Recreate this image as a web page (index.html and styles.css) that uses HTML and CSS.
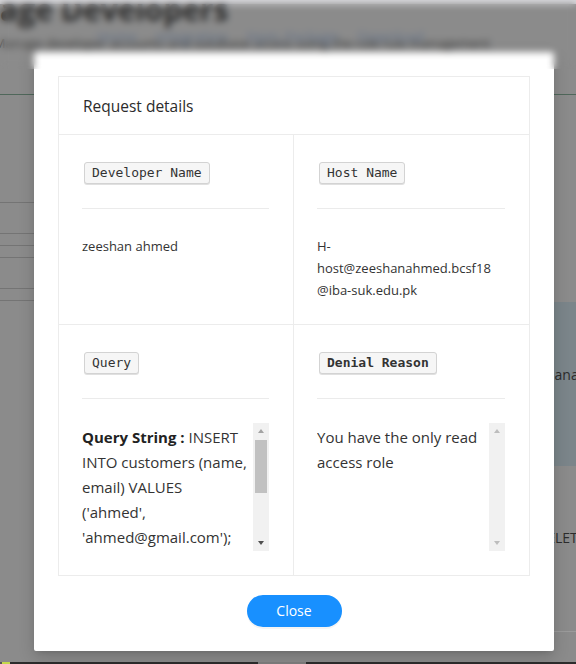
FILE: index.html
```html
<!DOCTYPE html>
<html lang="en">
<head>
<meta charset="utf-8">
<title>Manage Developers</title>
<link rel="stylesheet" href="styles.css">
</head>
<body>
<div class="page">
  <div class="topbar"></div>
  <header class="page-head">
    <h1 class="page-title">Manage Developers</h1>
    <p class="page-sub">Manage developer accounts and database access using the role rule management</p>
    <nav class="page-nav"><a>Home</a><a>Integration</a><a>Npm_Package</a><a>Download</a></nav>
  </header>
  <div class="page-body">
    <aside class="side">
      <div class="side-row h107"></div>
      <div class="side-row h30"></div>
      <div class="side-row h11"></div>
      <div class="side-row h11"></div>
      <div class="side-row h30"></div>
      <div class="side-row h11"></div>
    </aside>
    <main class="content">
      <div class="content-spacer"></div>
      <div class="band"><span>Manage</span></div>
      <div class="action-row"><span>DELETE</span></div>
    </main>
  </div>
  <div class="taskbar"><span class="tb-gap"></span><span class="tb-icon"></span><span class="tb-dark"></span><span class="tb-tab"></span><span class="tb-rest"></span></div>
</div>

<div class="modal">
  <section class="card">
    <div class="card-head">Request details</div>
    <div class="card-grid">
      <div class="cell">
        <kbd class="tag">Developer Name</kbd>
        <hr class="sep">
        <p class="value">zeeshan ahmed</p>
      </div>
      <div class="cell">
        <kbd class="tag">Host Name</kbd>
        <hr class="sep">
        <p class="value host">H-host@zeeshanahmed.bcsf18<wbr>@iba-suk.edu.pk</p>
      </div>
      <div class="cell last">
        <kbd class="tag">Query</kbd>
        <hr class="sep">
        <div class="scroll-box">
          <div class="scroll-text lines"><b>Query String :</b> INSERT<br>INTO customers (name,<br>email) VALUES<br>('ahmed',<br>'ahmed@gmail.com');<br>Requested on the<br>production database<br>by the developer.</div>
          <div class="scrollbar">
            <span class="sb-btn"><i class="arrow up"></i></span>
            <span class="sb-track"><span class="sb-thumb"></span></span>
            <span class="sb-btn"><i class="arrow down"></i></span>
          </div>
        </div>
      </div>
      <div class="cell last">
        <kbd class="tag"><b>Denial Reason</b></kbd>
        <hr class="sep">
        <div class="scroll-box">
          <div class="scroll-text">You have the only read access role</div>
          <div class="scrollbar disabled">
            <span class="sb-btn"><i class="arrow up"></i></span>
            <span class="sb-track"></span>
            <span class="sb-btn"><i class="arrow down"></i></span>
          </div>
        </div>
      </div>
    </div>
  </section>
  <div class="modal-foot">
    <button class="btn-close" type="button">Close</button>
  </div>
</div>

<div class="blur-band"></div>
</body>
</html>
```

FILE: styles.css
```css
* {
  box-sizing: border-box;
}

html, body {
  margin: 0;
  padding: 0;
}

body {
  width: 576px;
  height: 664px;
  overflow: hidden;
  position: relative;
  background: #8b8b8b;
  font-family: "Open Sans", "Liberation Sans", sans-serif;
  color: #333;
}

/* ---------- dimmed page behind the modal ---------- */
.page {
  display: flex;
  flex-direction: column;
  height: 664px;
}

.topbar {
  height: 4px;
  background: #d9d9dd;
  flex: none;
}

.page-head {
  position: relative;
  height: 91px;
  flex: none;
  border-bottom: 1px solid #4f675a;
  overflow: hidden;
}

.page-title {
  margin: -9px 0 0 -66px;
  font-size: 30px;
  line-height: 30px;
  font-weight: 700;
  color: #2b2b2b;
  white-space: nowrap;
}

.page-sub {
  margin: 10px 0 0 -6px;
  font-size: 13px;
  line-height: 16px;
  color: #3d3d3d;
  white-space: nowrap;
}

.page-nav {
  position: absolute;
  top: 24px;
  left: 97px;
  display: flex;
  gap: 19px;
  font-size: 14px;
  line-height: 18px;
  color: #66748a;
}

.page-body {
  flex: 1;
  display: grid;
  grid-template-columns: 200px 1fr;
}

.side-row {
  border-bottom: 1px solid #747474;
}
.h107 { height: 108px; }
.h30 { height: 31px; }
.h11 { height: 12px; }

.content {
  display: flex;
  flex-direction: column;
}

.content-spacer {
  height: 207px;
}

.band {
  height: 164px;
  background: #7b858a;
  padding: 63px 0 0 342px;
  font-size: 14px;
  line-height: 20px;
  color: #2c2c2c;
  white-space: nowrap;
  overflow: hidden;
}

.action-row {
  height: 166px;
  border-bottom: 1px solid #9b9b9b;
  padding: 62px 0 0 337px;
  font-size: 14px;
  line-height: 20px;
  color: #2c2c2c;
  white-space: nowrap;
  overflow: hidden;
}

.taskbar {
  height: 2px;
  flex: none;
  display: flex;
  background: #2c2c2c;
}
.tb-gap { width: 2px; background: #555; }
.tb-icon { width: 8px; background: #c4d84a; }
.tb-dark { width: 248px; }
.tb-tab { width: 48px; background: #7e7e7e; }
.tb-rest { flex: 1; }

/* ---------- modal ---------- */
.modal {
  position: absolute;
  left: 34px;
  top: 52px;
  width: 520px;
  padding: 24px;
  background: #fff;
  border-radius: 2px;
  box-shadow: 0 6px 16px rgba(0, 0, 0, 0.18), 0 3px 6px -4px rgba(0, 0, 0, 0.2);
  z-index: 5;
}

.card {
  border: 1px solid #ececec;
  background: #fff;
}

.card-head {
  height: 58px;
  padding: 0 24px;
  border-bottom: 1px solid #ececec;
  display: flex;
  align-items: center;
  font-size: 15.5px;
  color: #2b2b2b;
}

.card-grid {
  display: grid;
  grid-template-columns: repeat(2, minmax(0, 1fr));
}

.cell {
  padding: 27px 24px 23px 23px;
  border-bottom: 1px solid #ececec;
}
.cell:nth-child(odd) {
  border-right: 1px solid #ececec;
}
.cell.last {
  border-bottom: 0;
  padding-bottom: 24px;
}

.tag {
  display: inline-block;
  height: 22px;
  margin-left: 2px;
  padding: 0 7px;
  font-family: "DejaVu Sans Mono", "Liberation Mono", monospace;
  font-size: 13px;
  line-height: 20px;
  color: #333;
  background: #f6f6f6;
  border: 1px solid #d3d3d3;
  border-radius: 3px;
  box-shadow: 0 1px 0 rgba(0, 0, 0, 0.12);
  vertical-align: top;
}

.sep {
  display: block;
  margin: 24px 0 24px;
  height: 0;
  border: 0;
  border-top: 1px solid #ebebeb;
}

.value {
  margin: 0;
  padding-top: 2px;
  font-size: 13px;
  line-height: 22px;
  color: #333;
  overflow-wrap: break-word;
}

.value.host {
  padding-right: 6px;
}

.scroll-box {
  display: flex;
  height: 128px;
}

.scroll-text {
  flex: 1;
  min-width: 0;
  overflow: hidden;
  padding: 2px 3px 0 0;
  font-size: 15px;
  line-height: 25px;
  color: #333;
}

.scroll-text.lines {
  white-space: nowrap;
}

.scroll-text b {
  font-weight: 700;
  color: #222;
}

.scrollbar {
  width: 16px;
  flex: none;
  display: flex;
  flex-direction: column;
  background: #f1f1f1;
}

.sb-btn {
  height: 16px;
  flex: none;
  display: flex;
  align-items: center;
  justify-content: center;
}

.sb-track {
  flex: 1;
  padding-top: 1px;
}

.sb-thumb {
  display: block;
  width: 12px;
  height: 53px;
  margin-left: 2px;
  background: #c1c1c1;
}

.arrow {
  display: block;
  width: 0;
  height: 0;
  border-left: 3.5px solid transparent;
  border-right: 3.5px solid transparent;
}
.arrow.up {
  border-bottom: 4px solid #a3a3a3;
}
.arrow.down {
  border-top: 4px solid #505050;
}
.disabled .arrow.up {
  border-bottom-color: #bdbdbd;
}
.disabled .arrow.down {
  border-top-color: #bdbdbd;
}

.modal-foot {
  margin-top: 19px;
  display: flex;
  justify-content: center;
}

.btn-close {
  width: 95px;
  height: 32px;
  padding: 0;
  border: 0;
  border-radius: 16px;
  background: #1890ff;
  color: #fff;
  font-family: "Open Sans", "Liberation Sans", sans-serif;
  font-size: 14px;
  line-height: 32px;
  box-shadow: 0 2px 0 rgba(0, 0, 0, 0.045);
}

/* ---------- blurred strip over the top of the screen ---------- */
.blur-band {
  position: absolute;
  top: 0;
  left: 0;
  width: 576px;
  height: 69px;
  backdrop-filter: blur(3.5px);
  -webkit-backdrop-filter: blur(3.5px);
  z-index: 10;
}
```
